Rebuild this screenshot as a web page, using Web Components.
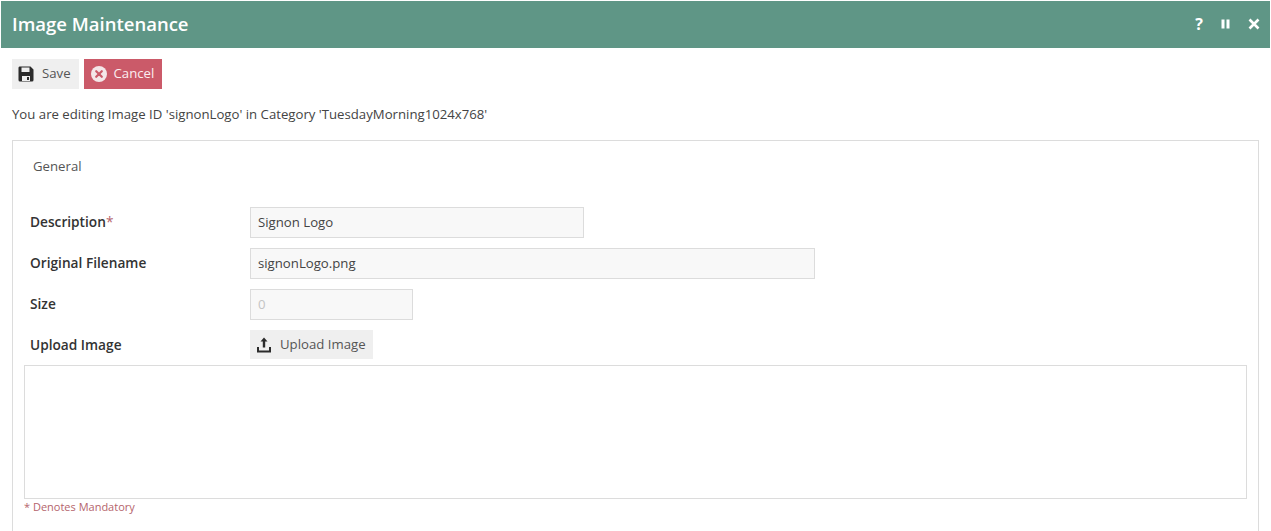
<!DOCTYPE html>
<html>
<head>
<meta charset="utf-8">
<title>Image Maintenance</title>
<style>
html, body { margin: 0; padding: 0; background: #fff; overflow: hidden; }
body { font-family: "Open Sans", sans-serif; font-size: 13.2px; color: #444; height: 531px; }
</style>
</head>
<body>
<image-window heading="Image Maintenance">
  <tool-button slot="tools" icon="save">Save</tool-button>
  <tool-button slot="tools" icon="cancel" kind="danger">Cancel</tool-button>
  <p slot="note" style="margin:0">You are editing Image ID 'signonLogo' in Category 'TuesdayMorning1024x768'</p>
  <form-panel tab="General">
    <form-row label="Description" required><text-box width="334" value="Signon Logo"></text-box></form-row>
    <form-row label="Original Filename"><text-box width="565" value="signonLogo.png"></text-box></form-row>
    <form-row label="Size"><text-box width="163" value="0" disabled></text-box></form-row>
    <form-row label="Upload Image" last><tool-button icon="upload" small>Upload Image</tool-button></form-row>
  </form-panel>
</image-window>

<script>
const ICONS = {
  save: `<svg width="16" height="16" viewBox="0 0 16 16"><path fill="#2b2b2b" d="M1.5 0.5H12.5L15.5 3.5V14a1.5 1.5 0 0 1-1.5 1.5H2A1.5 1.5 0 0 1 .5 14V2A1.5 1.5 0 0 1 1.5.5Z"/><rect x="3.5" y="1.5" width="8" height="4.5" fill="#efefef"/><rect x="4" y="10" width="8" height="5" fill="#efefef"/><rect x="9" y="11" width="2" height="3" fill="#2b2b2b"/></svg>`,
  cancel: `<svg width="16" height="16" viewBox="0 0 16 16"><circle cx="8" cy="8" r="8" fill="#f4e6e8"/><path d="M5.2 5.2L10.8 10.8M10.8 5.2L5.2 10.8" stroke="#cb5a69" stroke-width="2.2" stroke-linecap="round"/></svg>`,
  upload: `<svg width="16" height="16" viewBox="0 0 16 16"><path fill="#2b2b2b" d="M8 0.5L11.5 4.6H9.2V10.5H6.8V4.6H4.5Z"/><path fill="none" stroke="#2b2b2b" stroke-width="2" d="M2 10V14.5H14V10"/></svg>`
};

class ImageWindow extends HTMLElement {
  constructor() {
    super();
    this.attachShadow({ mode: "open" }).innerHTML = `
      <style>
        :host { display: block; }
        header {
          display: flex; align-items: center; justify-content: space-between;
          height: 47px; margin: 1px 1px 0; padding: 0 10px 0 11px;
          background: #5f9686; color: #fff;
        }
        h1 { margin: 0 0 2px; font: 600 18.5px/24px "Open Sans", sans-serif; }
        .ctl { display: flex; gap: 15px; align-items: center; margin-bottom: 1px; }
        .ctl svg { display: block; }
        .ctl svg:last-child { margin-left: 1px; }
        .ctl b { font: 700 16px/16px "Open Sans", sans-serif; width: 12px; text-align: center; }
        .tools { display: flex; gap: 5px; padding: 11px 12px 0; }
        .note { padding: 16px 12px 0; line-height: 18px; }
        .body { padding: 17px 12px 0; }
      </style>
      <header>
        <h1></h1>
        <div class="ctl">
          <b>?</b>
          <svg width="12" height="12" viewBox="0 0 12 12"><path fill="#fff" d="M1.5 1.5H4.5V10.5H1.5ZM6.5 1.5H9.5V10.5H6.5Z"/></svg>
          <svg width="12" height="12" viewBox="0 0 12 12"><path stroke="#fff" stroke-width="2.6" d="M1.5 1.5L10.5 10.5M10.5 1.5L1.5 10.5"/></svg>
        </div>
      </header>
      <div class="tools"><slot name="tools"></slot></div>
      <div class="note"><slot name="note"></slot></div>
      <div class="body"><slot></slot></div>`;
    this.shadowRoot.querySelector("h1").textContent = this.getAttribute("heading");
  }
}

class ToolButton extends HTMLElement {
  constructor() {
    super();
    const danger = this.getAttribute("kind") === "danger";
    const small = this.hasAttribute("small");
    this.attachShadow({ mode: "open" }).innerHTML = `
      <style>
        :host { display: inline-flex; }
        button {
          display: flex; align-items: center; gap: ${danger ? 7 : 8}px;
          height: ${small ? 29 : 30}px; padding: 0 ${small ? 7 : 8}px 0 ${danger ? 7 : 6}px; border: 0;
          background: ${danger ? "#cb5a69" : "#efefef"};
          color: ${danger ? "#fbeef0" : "#555"};
          font: 13.2px "Open Sans", sans-serif;
        }
        svg { display: block; }
        span { position: relative; top: -1px; }
      </style>
      <button type="button">${ICONS[this.getAttribute("icon")]}<span><slot></slot></span></button>`;
  }
}

class FormPanel extends HTMLElement {
  constructor() {
    super();
    this.attachShadow({ mode: "open" }).innerHTML = `
      <style>
        :host { display: block; border: 1px solid #dcdcdc; border-bottom: 0; height: 391px; box-sizing: border-box; }
        .tab { padding: 16px 0 0 20px; line-height: 18px; color: #555; }
        .rows { padding: 32px 11px 0; }
        .art { height: 132px; border: 1px solid #dcdcdc; }
        .mand { font-size: 11px; line-height: 15px; color: #b5646c; }
      </style>
      <div class="tab"></div>
      <div class="rows">
        <slot></slot>
        <div class="art"></div>
        <div class="mand">* Denotes Mandatory</div>
      </div>`;
    this.shadowRoot.querySelector(".tab").textContent = this.getAttribute("tab");
  }
}

class FormRow extends HTMLElement {
  constructor() {
    super();
    const last = this.hasAttribute("last");
    this.attachShadow({ mode: "open" }).innerHTML = `
      <style>
        :host { display: flex; align-items: center; margin-bottom: ${last ? 6 : 10}px; }
        label { width: 226px; padding-left: 6px; margin-bottom: ${last ? 0 : 2}px; box-sizing: border-box; font-weight: 600; font-size: 13.7px; color: #333; }
        i { font-style: normal; font-weight: 400; color: #b5646c; }
      </style>
      <label></label><slot></slot>`;
    const label = this.shadowRoot.querySelector("label");
    label.textContent = this.getAttribute("label");
    if (this.hasAttribute("required")) label.insertAdjacentHTML("beforeend", "<i>*</i>");
  }
}

class TextBox extends HTMLElement {
  constructor() {
    super();
    const disabled = this.hasAttribute("disabled");
    this.attachShadow({ mode: "open" }).innerHTML = `
      <style>
        :host { display: block; }
        div {
          box-sizing: border-box; height: 31px; line-height: 29px; padding: 0 7px;
          width: ${this.getAttribute("width")}px;
          border: 1px solid #dcdcdc; background: #f8f8f8;
          color: ${disabled ? "#c4c4c4" : "#444"};
        }
      </style>
      <div></div>`;
    this.shadowRoot.querySelector("div").textContent = this.getAttribute("value");
  }
}

customElements.define("image-window", ImageWindow);
customElements.define("tool-button", ToolButton);
customElements.define("form-panel", FormPanel);
customElements.define("form-row", FormRow);
customElements.define("text-box", TextBox);
</script>
</body>
</html>
